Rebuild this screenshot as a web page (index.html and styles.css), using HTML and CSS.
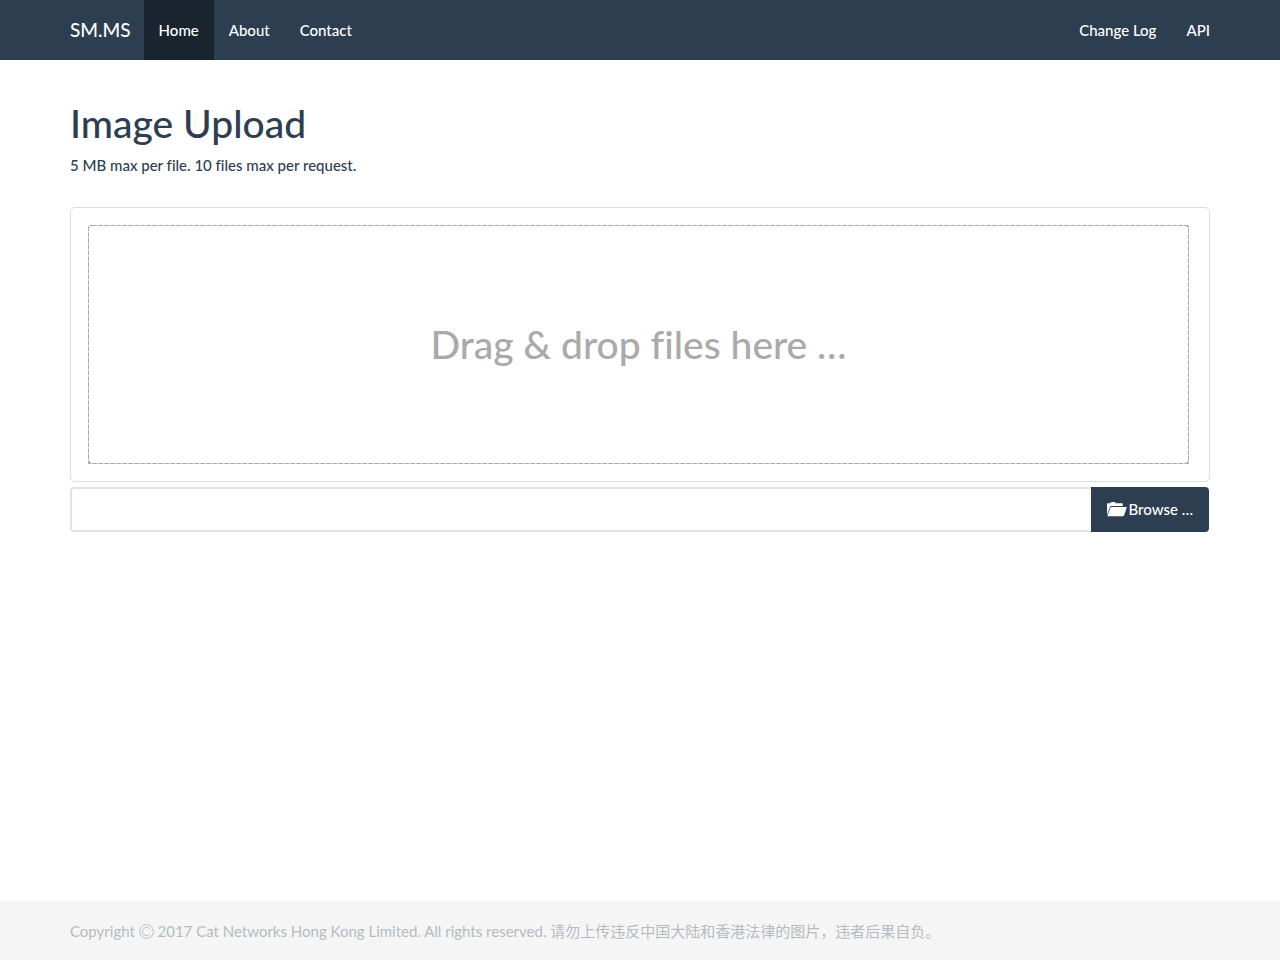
FILE: index.html
```html
<!DOCTYPE html>
<html lang="en">
<head>
<meta charset="utf-8">
<meta name="viewport" content="width=device-width, initial-scale=1">
<title>Image Upload - SM.MS</title>
<link rel="stylesheet" href="styles.css">
</head>
<body>
<header class="navbar">
  <div class="container navbar-inner">
    <a class="brand" href="#">SM.MS</a>
    <nav class="nav">
      <a class="nav-link active" href="#">Home</a>
      <a class="nav-link" href="#">About</a>
      <a class="nav-link" href="#">Contact</a>
    </nav>
    <nav class="nav nav-right">
      <a class="nav-link" href="#">Change Log</a>
      <a class="nav-link" href="#">API</a>
    </nav>
  </div>
</header>
<main class="container main">
  <h1 class="title">Image Upload</h1>
  <p class="lead">5 MB max per file. 10 files max per request.</p>
  <div class="preview">
    <div class="drop-zone">
      <svg class="dashes" aria-hidden="true"><rect width="100%" height="100%" rx="4"/></svg>
      Drag &amp; drop files here …
    </div>
  </div>
  <div class="input-group">
    <input class="caption" type="text" aria-label="Selected files" readonly>
    <button class="browse" type="button">
      <svg class="folder" viewBox="0 0 20 15" aria-hidden="true"><path d="M0 12.8V2.2Q0 1.3.9 1.3H3.3Q3.7 0 4.6 0H7.4Q8.3 0 8.7 1.3H14.9Q15.8 1.3 15.8 2.2V3.9H4.4Q3.4 3.9 3.1 4.7Z"/><path d="M4.6 4.9H19.2Q20 4.9 19.7 5.7L17 13.4Q16.7 14.2 15.9 14.2H.8Q.2 14.2.5 13.4L3.5 5.6Q3.8 4.9 4.6 4.9Z"/></svg>
      <span>Browse …</span>
    </button>
  </div>
</main>
<footer class="footer">
  <div class="container">
    <p class="copyright">Copyright <svg class="copy-icon" viewBox="0 0 16 16" role="img" aria-label="©"><circle cx="8" cy="8" r="7.3"/><path d="M11.6 5.4A4.4 4.4 0 1 0 11.6 10.6"/></svg> 2017 Cat Networks Hong Kong Limited. All rights reserved. 请勿上传违反中国大陆和香港法律的图片，违者后果自负。</p>
  </div>
</footer>
</body>
</html>
```
FILE: styles.css
```css
* { box-sizing: border-box; }

body {
  display: flex;
  flex-direction: column;
  min-height: 100vh;
  margin: 0;
  background: #fff;
  color: #2c3e50;
  font: 500 15px/21px Lato, "Noto Sans CJK SC", sans-serif;
  font-variant-ligatures: none;
}

a { color: inherit; text-decoration: none; }

.container {
  width: 100%;
  max-width: 1170px;
  margin: 0 auto;
  padding: 0 15px;
}

.navbar { background: #2c3e50; color: #fff; }
.navbar-inner { display: flex; }

.brand {
  padding: 19px 13px 20px 0;
  font-size: 19px;
}

.nav { display: flex; }
.nav-right { margin-left: auto; margin-right: -15px; }
.nav-link { padding: 20px 15px 19px; }
.nav-link.active { background: #1a242f; }

.main { flex: 1; }

.title {
  margin: 42px 0 10px;
  font-size: 39px;
  font-weight: 500;
  line-height: 43px;
}

.lead { margin: 0; }

.preview {
  margin: 31px 0 5px;
  padding: 17px 20px 17px 17px;
  border: 1px solid #ddd;
  border-radius: 5px;
}

.drop-zone {
  position: relative;
  padding: 99px 10px;
  color: #aaa;
  font-size: 39px;
  line-height: 41px;
  text-align: center;
}

.dashes {
  position: absolute;
  inset: 0;
  width: 100%;
  height: 100%;
  fill: none;
  stroke: #aaa;
  stroke-width: 2;
  stroke-dasharray: 5 1;
  pointer-events: none;
}

.input-group { display: flex; }

.caption {
  flex: 1;
  min-width: 0;
  height: 45px;
  padding: 10px 15px;
  border: 2px solid #dce4ec;
  border-right: 0;
  border-radius: 4px 0 0 4px;
  font: inherit;
}

.browse {
  display: flex;
  align-items: center;
  gap: 1px;
  margin-right: 1px;
  padding: 0 16px;
  border: 0;
  border-radius: 0 4px 4px 0;
  background: #2c3e50;
  color: #fff;
  font: inherit;
}

.folder { width: 20px; height: 15px; fill: currentColor; }

.footer {
  padding: 20px 0 18px;
  background: #f5f5f5;
  color: #b4bcc2;
}

.copyright { margin: 0; font-weight: 400; }

.copy-icon {
  width: 15px;
  height: 15px;
  fill: none;
  stroke: currentColor;
  stroke-width: 1;
  vertical-align: -2px;
}
```
